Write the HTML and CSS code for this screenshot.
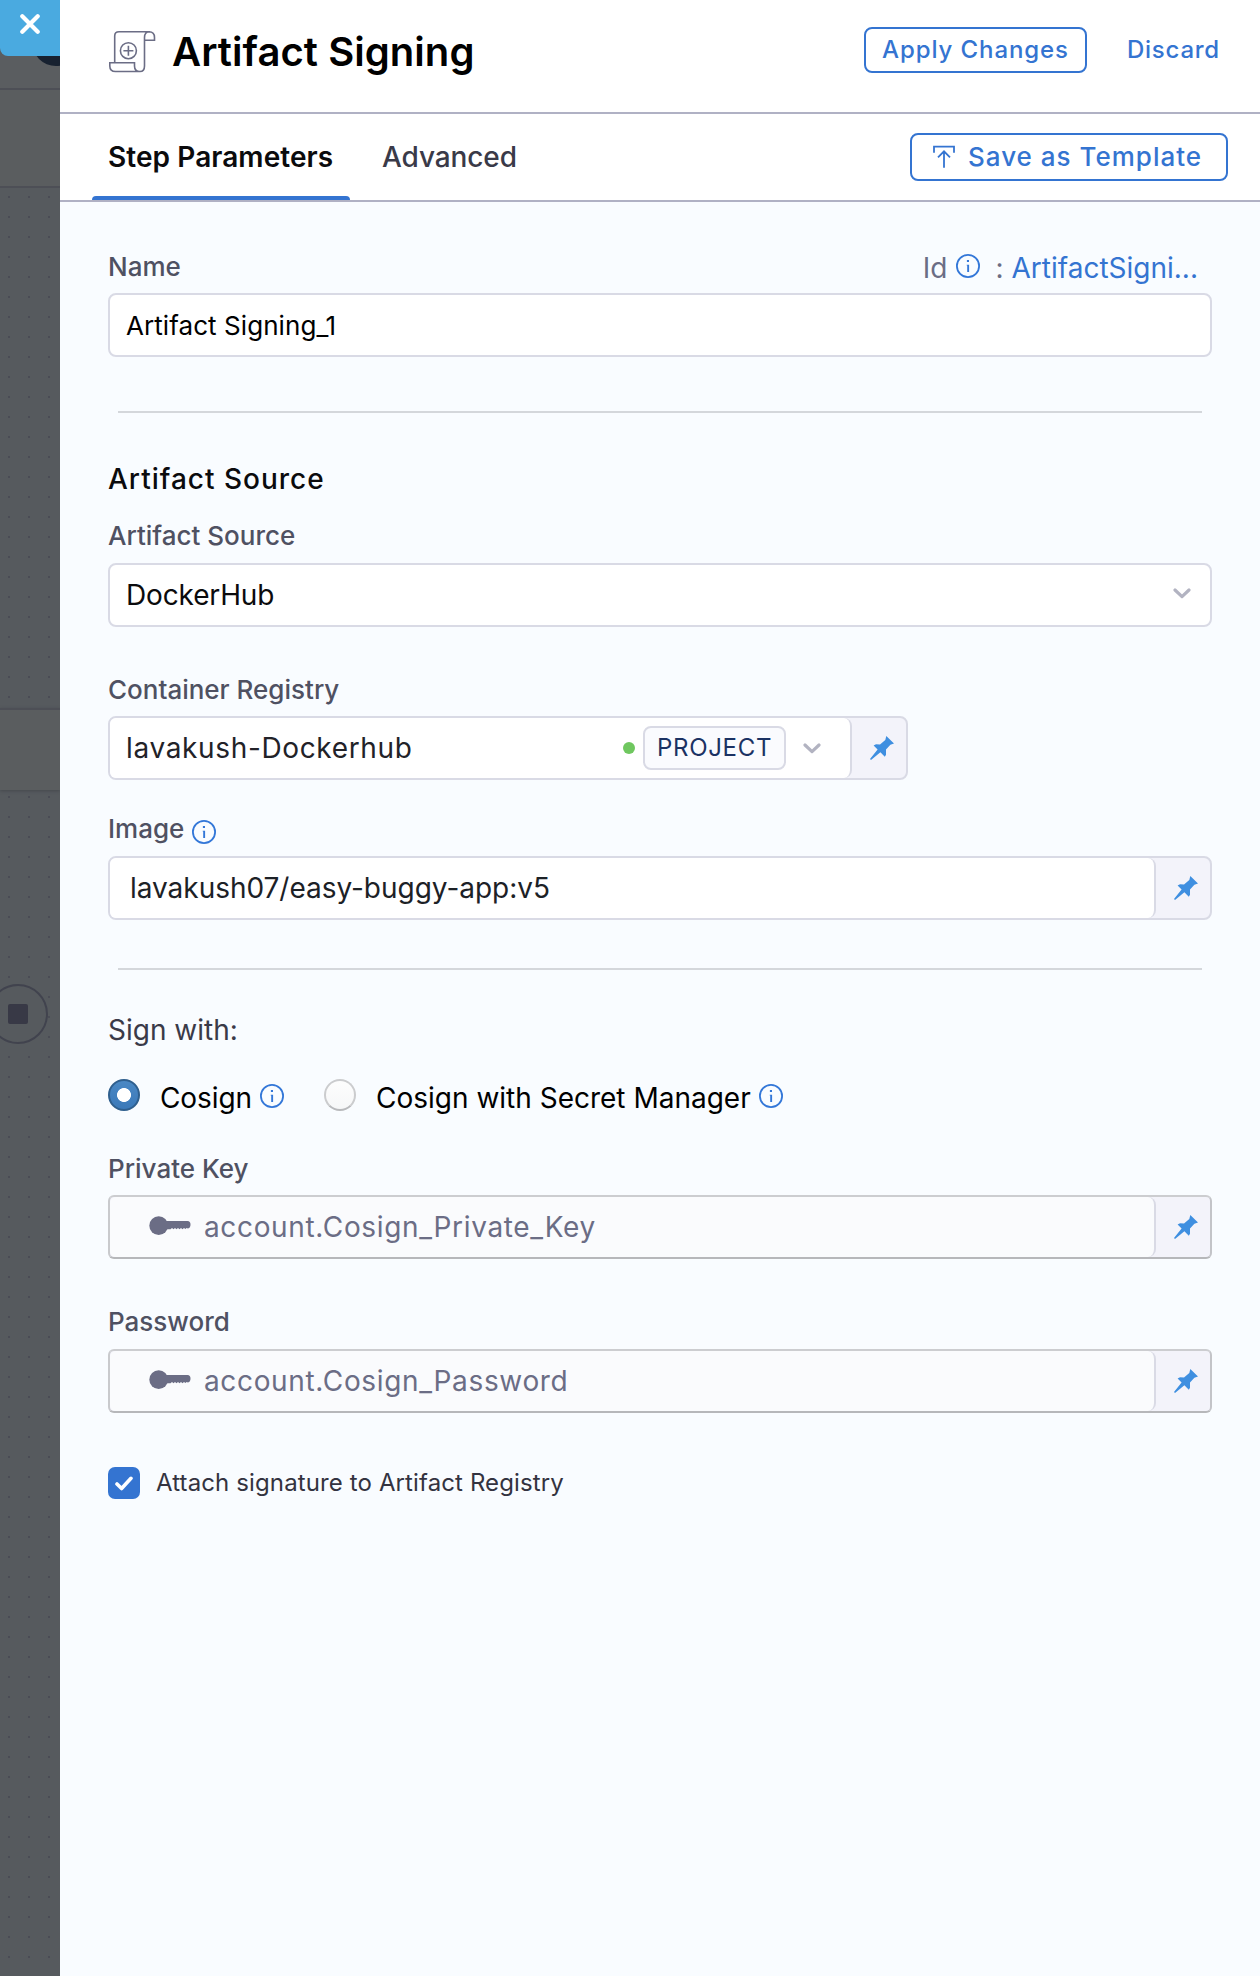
FILE: index.html
```
<!DOCTYPE html>
<html lang="en">
<head>
<meta charset="utf-8">
<title>Artifact Signing</title>
<link rel="stylesheet" href="styles.css">
</head>
<body>
<svg class="sprite" aria-hidden="true">
  <symbol id="info" viewBox="0 0 24 24">
    <circle cx="12" cy="12" r="11.1" fill="none" stroke="currentColor" stroke-width="1.8"/>
    <path d="M10.9 6h2.1v2.1h-2.1zM10.7 10.7h2.4V18h-1.9v-6.4h-.5z" fill="currentColor"/>
  </symbol>
  <symbol id="pin" viewBox="0 0 24 24">
    <path d="M16.3 0 24 7.4 20.4 8.7 16 13.6V18.7L14.8 20.8 10.4 16.2 1 23.9 0 23 7.6 13.4 3.6 9.4 6 8.3 10 8.5 15.3 4z" fill="currentColor"/>
  </symbol>
  <symbol id="chevron" viewBox="0 0 18 11">
    <path d="M2 2l7 6.6L16 2" fill="none" stroke="currentColor" stroke-width="3.2" stroke-linecap="round" stroke-linejoin="round"/>
  </symbol>
  <symbol id="key" viewBox="0 0 42 20">
    <circle cx="9.7" cy="9.7" r="9.4" fill="currentColor"/>
    <path d="M16 5h22.5q3 0 3 3.5t-2.5 4l-1.5-.6-1 1.1-1.5-1.1-1.5 1.3-1.5-1.2-1.5 1.2-1.5-1.1-1.5 1.2-1.5-1.2-1.5 1.2-1.5-1.2-1.5 1.2H16z" fill="currentColor"/>
  </symbol>
</svg>

<div class="page">
  <div class="backdrop">
    <div class="canvas-top"></div>
    <div class="canvas-bar"></div>
    <div class="canvas-grid upper"></div>
    <div class="canvas-band"></div>
    <div class="canvas-grid lower"></div>
    <div class="avatar"></div>
    <div class="end-node"><div class="end-stop"></div></div>
    <button class="close" aria-label="Close">
      <svg width="20" height="20" viewBox="0 0 20 20"><path d="M2.3 2.3l15.4 15.4M17.7 2.3L2.3 17.7" stroke="#fff" stroke-width="4.2" stroke-linecap="round"/></svg>
    </button>
  </div>

  <main class="drawer">
    <header class="header">
      <svg class="scroll-icon" width="47" height="42" viewBox="0 0 47 42" fill="none" stroke="#6b6d85" stroke-width="1.6">
        <path d="M5.7 31.7V5Q5.7.8 10 .8H40Q45.5.8 45.5 6.5V9.2H35.5V6.5Q35.5.8 40.5.8M35.5 9V35Q35.5 40.5 31 40.5H6.5Q.8 40.5.8 35V31.7H25.5V35Q25.5 40.5 31 40.5"/>
        <circle cx="19.4" cy="19.7" r="8"/>
        <path d="M19.4 14.7v10M14.4 19.7h10"/>
      </svg>
      <h1 class="title">Artifact Signing</h1>
      <button class="btn apply">Apply Changes</button>
      <button class="discard">Discard</button>
    </header>

    <nav class="tabs">
      <div class="tab active">Step Parameters</div>
      <div class="tab">Advanced</div>
      <button class="btn save">
        <svg width="22" height="24" viewBox="0 0 22 24" fill="none" stroke="currentColor" stroke-width="1.8"><path d="M1 7.7V1.7H21V7.7M11 22.7V6.5M5 12.3l6-6 6 6"/></svg>
        Save as Template
      </button>
    </nav>

    <form class="form">
      <div class="label-row">
        <label class="label">Name</label>
        <div class="ident">
          <span>Id</span>
          <svg class="info"><use href="#info"/></svg>
          <span class="colon">:</span>
          <a class="link">ArtifactSigni...</a>
        </div>
      </div>
      <div class="field small-text"><div class="value">Artifact Signing_1</div></div>

      <hr class="rule first">

      <h2 class="heading">Artifact Source</h2>
      <label class="label source">Artifact Source</label>
      <div class="field select"><div class="value">DockerHub</div><svg class="chevron"><use href="#chevron"/></svg></div>

      <label class="label registry">Container Registry</label>
      <div class="field pinned narrow">
        <div class="inner">
          <div class="value spaced">lavakush-Dockerhub</div>
          <span class="status"></span>
          <span class="scope">PROJECT</span>
          <svg class="chevron"><use href="#chevron"/></svg>
        </div>
        <div class="pin"><svg><use href="#pin"/></svg></div>
      </div>

      <label class="label image">Image <svg class="info"><use href="#info"/></svg></label>
      <div class="field pinned">
        <div class="inner image-value"><div class="value">lavakush07/easy-buggy-app:v5</div></div>
        <div class="pin"><svg><use href="#pin"/></svg></div>
      </div>

      <hr class="rule second">

      <div class="sign-with">Sign with:</div>
      <div class="radios">
        <span class="radio checked"></span>
        <span class="radio-text">Cosign</span>
        <svg class="info"><use href="#info"/></svg>
        <span class="radio next"></span>
        <span class="radio-text">Cosign with Secret Manager</span>
        <svg class="info"><use href="#info"/></svg>
      </div>

      <label class="label private-key">Private Key</label>
      <div class="field pinned secret">
        <div class="inner"><svg class="key"><use href="#key"/></svg><div class="value spaced">account.Cosign_Private_Key</div></div>
        <div class="pin"><svg><use href="#pin"/></svg></div>
      </div>

      <label class="label password">Password</label>
      <div class="field pinned secret">
        <div class="inner"><svg class="key"><use href="#key"/></svg><div class="value spaced">account.Cosign_Password</div></div>
        <div class="pin"><svg><use href="#pin"/></svg></div>
      </div>

      <div class="attach">
        <span class="checkbox"><svg width="18" height="15" viewBox="0 0 18 15"><path d="M2 8l4.6 4.5L16 2.3" fill="none" stroke="#fff" stroke-width="3.6" stroke-linecap="round" stroke-linejoin="round"/></svg></span>
        <span>Attach signature to Artifact Registry</span>
      </div>
    </form>
  </main>
</div>
</body>
</html>
```
FILE: styles.css
```
* { box-sizing: border-box; }

body {
  margin: 0;
  font-family: Inter, "Liberation Sans", sans-serif;
  font-size: 28px;
  line-height: 34px;
  color: #0b0b0d;
}

button {
  font: inherit;
  background: none;
  border: 0;
  padding: 0;
  margin: 0;
}

svg { display: block; flex: none; }
.sprite { position: absolute; width: 0; height: 0; }

.page { display: flex; height: 1976px; overflow: hidden; }

/* Dimmed canvas to the left of the drawer */
.backdrop {
  position: relative;
  display: flex;
  flex-direction: column;
  flex: none;
  width: 60px;
  overflow: hidden;
  background: #565a5e;
}
.canvas-top { height: 90px; background: #5a5d60; border-bottom: 2px solid #4d4f56; }
.canvas-bar { height: 98px; background: #5a5d5f; border-bottom: 2px solid #4d4f56; }
.canvas-grid {
  background-image: radial-gradient(circle at 9px 9px, #4a4c55 1.2px, transparent 1.3px);
  background-size: 20px 20px;
}
.canvas-grid.upper { height: 520px; }
.canvas-band {
  height: 82px;
  background: #5a5d5f;
  border-top: 2px solid #4d4f56;
  box-shadow: 0 1px 3px #45484d;
}
.canvas-grid.lower { flex: 1; background-position: 0 -2px; }
.avatar {
  position: absolute;
  left: 32px;
  top: 18px;
  width: 48px;
  height: 48px;
  border-radius: 50%;
  background: #172130;
}
.end-node {
  position: absolute;
  left: -12px;
  top: 984px;
  width: 60px;
  height: 60px;
  display: flex;
  align-items: center;
  justify-content: center;
  border: 2px solid #41434e;
  border-radius: 50%;
  background: #565a5e;
}
.end-stop { width: 20px; height: 20px; border-radius: 2px; background: #383946; }
.close {
  position: absolute;
  left: 0;
  top: 0;
  width: 60px;
  height: 56px;
  padding: 14px 20px 22px;
  background: #4aaae0;
  border-bottom-left-radius: 8px;
}

.drawer { flex: 1; min-width: 0; background: #f9fcff; }

.header {
  display: flex;
  align-items: flex-start;
  height: 114px;
  padding: 27px 0 0 49px;
  background: #fff;
  border-bottom: 2px solid #b0b1c4;
}
.scroll-icon { margin-top: 4px; }
.title {
  margin: 0 auto 0 16px;
  font-size: 40px;
  font-weight: 600;
  line-height: 50px;
  letter-spacing: 0.06px;
  color: #000;
}
.btn {
  color: #3474d1;
  border: 2px solid #3474d1;
  border-radius: 8px;
  font-weight: 500;
  white-space: nowrap;
}
.apply { width: 223px; height: 46px; font-size: 24px; letter-spacing: 0.9px; line-height: 41px; padding-bottom: 1px; }
.discard {
  width: 96px;
  margin: 0 37px 0 40px;
  color: #3474d1;
  font-size: 24px;
  font-weight: 500;
  letter-spacing: 0.75px;
  line-height: 45px;
  text-align: left;
}

.tabs {
  display: flex;
  height: 88px;
  padding-left: 32px;
  background: #fff;
  border-bottom: 2px solid #b0b1c4;
}
.tab {
  position: relative;
  padding: 0 16px;
  line-height: 87px;
  font-weight: 500;
  letter-spacing: -0.1px;
  color: #3a3a48;
}
.tab + .tab { margin-left: 16px; }
.tab.active { width: 258px; font-weight: 600; letter-spacing: 0.07px; color: #0b0b0d; white-space: nowrap; }
.tab.active::after {
  content: "";
  position: absolute;
  left: 0;
  right: 0;
  bottom: 0;
  height: 4px;
  background: #3474d1;
  border-radius: 4px 4px 0 0;
}
.save {
  display: flex;
  align-items: center;
  gap: 13px;
  width: 318px;
  height: 48px;
  margin: 19px 32px 0 auto;
  padding: 0 0 1px 21px;
  font-size: 26px;
  letter-spacing: 1px;
}

.form { padding: 48px 48px 0; }

.label-row { display: flex; justify-content: space-between; height: 43px; }
.label {
  display: flex;
  height: 34px;
  margin-bottom: 10px;
  font-size: 26px;
  font-weight: 500;
  color: #4f5162;
}
.label.source { margin-top: 23px; }
.label.registry { margin-top: 46px; margin-bottom: 9px; }
.label.image { margin-top: 32px; gap: 8px; }
.label.image .info { margin-top: 8px; }
.label.private-key { margin-top: 41px; margin-bottom: 9px; }
.label.password { margin-top: 46px; }

.ident { display: flex; padding: 1px 14px 0 0; color: #6b6d85; }
.ident .info { margin: 3px 16px 0 8px; }
.colon { width: 16px; }
.link { color: #3474d1; }
.info { width: 24px; height: 24px; color: #3377d8; }

.field {
  display: flex;
  align-items: center;
  height: 64px;
  padding-left: 16px;
  background: #fff;
  border: 2px solid #d9dae5;
  border-radius: 8px;
}
.value { flex: 1; white-space: nowrap; }
.small-text { padding-top: 2px; font-size: 26px; letter-spacing: 0.07px; color: #000; }
.spaced { letter-spacing: 0.65px; }
.select { padding-right: 19px; }
.select .value { letter-spacing: -0.15px; }
.chevron { width: 18px; height: 11px; color: #b2b3c1; }
.select .chevron { margin-bottom: 3px; }

.pinned { padding: 0; background: #f3f3fa; align-items: stretch; }
.narrow { width: 800px; }
.inner {
  display: flex;
  align-items: center;
  flex: 1;
  padding-left: 16px;
  background: #fff;
  border-right: 2px solid #d9dae5;
  border-radius: 6px 8px 8px 6px;
  color: #222228;
}
.image-value { padding-left: 20px; color: #1c2126; }
.image-value .value { letter-spacing: -0.03px; }
.pin {
  display: flex;
  align-items: center;
  width: 54px;
  padding-left: 18px;
  color: #3f8fe0;
}
.pin svg { width: 24px; height: 24px; }
.status { width: 12px; height: 12px; margin-right: 8px; border-radius: 50%; background: #6fc75f; }
.scope {
  width: 143px;
  height: 44px;
  margin-right: 17px;
  padding-left: 12px;
  border: 2px solid #d9dae5;
  border-radius: 8px;
  background: #fafbfe;
  color: #1b3263;
  font-size: 24px;
  line-height: 39px;
  letter-spacing: 0.7px;
}
.scope + .chevron { margin-right: 29px; }

.rule { height: 2px; margin: 54px 10px 49px; border: 0; background: #d4d7db; }
.rule.second { margin: 48px 10px 43px; }
.heading { margin: 0; font-size: 28px; line-height: 34px; font-weight: 550; letter-spacing: 1px; }

.sign-with { color: #3a3a48; }
.radios { display: flex; align-items: flex-start; height: 32px; margin-top: 32px; color: #000; }
.radio {
  width: 32px;
  height: 32px;
  margin-right: 20px;
  border: 2px solid #cbccce;
  border-bottom-color: #b8b9bc;
  border-radius: 50%;
  background: linear-gradient(#fdfdfd, #f6f7f8);
}
.radio.checked {
  border-color: #2f5f8e;
  background: radial-gradient(circle, #fff 6.6px, transparent 7.3px), linear-gradient(#4b88c4, #3b79b9);
}
.radio.next { margin-left: 40px; }
.radio-text { margin-top: 2px; white-space: nowrap; }
.radios .info { margin: 5px 0 0 8px; }
.radios .radio.checked + .radio-text { width: 92px; letter-spacing: -0.1px; }

.secret { border-color: #cccdd0 #c3c4c8 #b6b7ba #c9cacd; border-radius: 6px; }
.secret .inner { padding-left: 39px; background: #fafbfd; color: #6b6d85; }
.key { width: 42px; height: 20px; margin: -2px 13px 0 0; }

.attach {
  display: flex;
  align-items: center;
  gap: 16px;
  height: 32px;
  margin-top: 54px;
  font-size: 24px;
  line-height: 30px;
  letter-spacing: 0.12px;
  color: #333340;
}
.checkbox {
  display: flex;
  align-items: center;
  justify-content: center;
  width: 32px;
  height: 32px;
  border-radius: 7px;
  background: #3474d1;
}
```
